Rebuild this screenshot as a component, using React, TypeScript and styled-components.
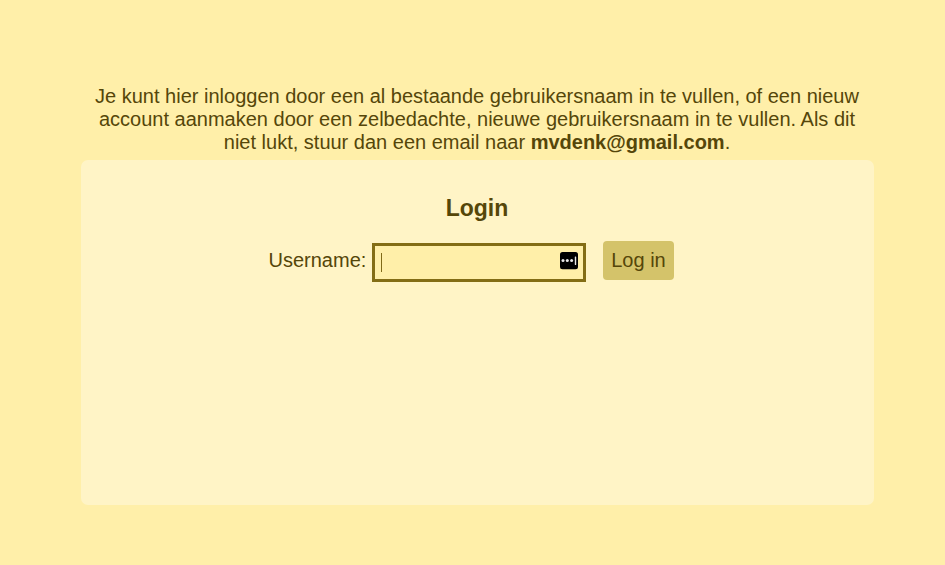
import React from "react";
import styled, { createGlobalStyle } from "styled-components";

const GlobalStyle = createGlobalStyle`
  * { box-sizing: border-box; }
  body { margin: 0; background: #ffefa9; color: #554609; font-family: "Liberation Sans", Arial, sans-serif; font-size: 20px; line-height: 23px; }
`;
const Page = styled.main`
  width: 793px;
  margin-left: 81px;
  padding-top: 85px;
`;
const Intro = styled.p`
  margin: 0;
  height: 75px;
  padding-right: 1px;
  text-align: center;
  white-space: nowrap;
`;
const Panel = styled.section`
  height: 345px;
  padding-top: 35px;
  border-radius: 7px;
  background: #fff4c6;
`;
const Title = styled.h2`
  margin: 0;
  padding-right: 1px;
  font-size: 23px;
  line-height: 27px;
  text-align: center;
`;
const Form = styled.form`
  display: flex;
  align-items: flex-start;
  margin: 19px 0 0 187.5px;
`;
const Label = styled.label`
  width: 103.5px;
  padding-top: 8px;
`;
const Field = styled.div`
  display: flex;
  align-items: flex-start;
  justify-content: space-between;
  width: 214px;
  height: 39px;
  margin-top: 2px;
  padding: 6px 5px 0 6px;
  border: 3px solid #836d15;
  background: #ffefa9;
`;
const Caret = styled.span`
  width: 1px;
  height: 19px;
  margin-top: 1px;
  background: #806a18;
`;
const Button = styled.button`
  width: 71px;
  height: 39px;
  margin-left: 17px;
  padding: 0;
  border: 0;
  border-radius: 4px;
  background: #d4c36a;
  color: #554609;
  font: inherit;
`;

export default function App() {
  return (
    <>
      <GlobalStyle />
      <Page>
        <Intro>
          Je kunt hier inloggen door een al bestaande gebruikersnaam in te vullen, of een nieuw<br />
          account aanmaken door een zelbedachte, nieuwe gebruikersnaam in te vullen. Als dit<br />
          niet lukt, stuur dan een email naar <b>mvdenk@gmail.com</b>.
        </Intro>
        <Panel>
          <Title>Login</Title>
          <Form>
            <Label>Username:</Label>
            <Field>
              <Caret />
              <svg width="18" height="18" viewBox="0 0 18 18">
                <rect width="18" height="17.3" rx="2.5" fill="#000" />
                <g fill="#e8e8e8">
                  <circle cx="3" cy="8.5" r="1.5" />
                  <circle cx="7.3" cy="8.5" r="1.5" />
                  <circle cx="11.6" cy="8.5" r="1.5" />
                  <rect x="14.8" y="4.5" width="1.4" height="8.5" rx="0.5" />
                </g>
              </svg>
            </Field>
            <Button type="button">Log in</Button>
          </Form>
        </Panel>
      </Page>
    </>
  );
}
